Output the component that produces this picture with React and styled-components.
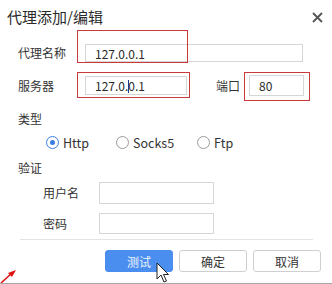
import React from "react";
import styled, { createGlobalStyle } from "styled-components";

const Global = createGlobalStyle`
  html, body { margin: 0; padding: 0; background: #fff; }
  * { box-sizing: border-box; }
`;

const Dialog = styled.div`
  position: relative;
  width: 332px;
  height: 284px;
  overflow: hidden;
  background: #fff;
  border-bottom: 1px solid #a8a8a8;
  font-family: "Noto Sans CJK SC", "Noto Sans", sans-serif;
  color: #333;
  display: flex;
  flex-direction: column;
`;

const Header = styled.div`
  height: 34px;
  display: flex;
  align-items: center;
  justify-content: space-between;
  padding: 0 9px 0 7px;
`;

const Title = styled.div`
  font-size: 15px;
  line-height: 20px;
  color: #2a2a2a;
  margin-top: -1px;
`;

const Close = styled.svg`
  width: 11px;
  height: 11px;
  margin-top: 1px;
`;

const Body = styled.div`
  display: flex;
  flex-direction: column;
  padding-left: 18px;
`;

const Row = styled.div`
  display: flex;
  align-items: center;
  margin-top: ${(p) => p.$mt || 0}px;
  padding-left: ${(p) => p.$indent || 0}px;
`;

const Label = styled.span`
  font-size: 12px;
  line-height: 16px;
  width: ${(p) => p.$w}px;
  flex: none;
  color: #333;
`;

const Section = styled.div`
  font-size: 12px;
  line-height: 16px;
  margin-top: ${(p) => p.$mt || 0}px;
  color: #333;
`;

const Field = styled.div`
  position: relative;
  width: ${(p) => p.$w}px;
  height: ${(p) => p.$h}px;
  border: 1px solid #d6d6d6;
  background: #fff;
  display: flex;
  align-items: center;
  padding-left: 9px;
  font-size: 12px;
  color: #2a2a2a;
  flex: none;
`;

const Caret = styled.span`
  display: inline-block;
  width: 1px;
  height: 13px;
  background: #1a3a8a;
  vertical-align: middle;
  margin: 0 -1px 0 0;
  position: relative;
  top: -1px;
`;

const Mark = styled.div`
  position: absolute;
  left: ${(p) => p.$l}px;
  top: ${(p) => p.$t}px;
  width: ${(p) => p.$w}px;
  height: ${(p) => p.$h}px;
  border: 1.5px solid #c9383b;
  pointer-events: none;
`;

const PortLabel = styled.span`
  font-size: 12px;
  line-height: 16px;
  margin-left: ${(p) => p.$ml}px;
  margin-right: ${(p) => p.$mr}px;
`;

const RadioGroup = styled.div`
  display: flex;
  align-items: center;
  margin-top: 7px;
  padding-left: 28px;
  height: 16px;
`;

const RadioItem = styled.label`
  display: flex;
  align-items: center;
  width: ${(p) => p.$w}px;
  font-size: 12.5px;
  color: #333;
`;

const Dot = styled.span`
  width: 13px;
  height: 13px;
  border-radius: 50%;
  border: 1px solid ${(p) => (p.$on ? "#3a7ee4" : "#9a9a9a")};
  display: flex;
  align-items: center;
  justify-content: center;
  margin-right: 4px;
  flex: none;
  &::after {
    content: "";
    width: 5px;
    height: 5px;
    border-radius: 50%;
    background: ${(p) => (p.$on ? "#3a7ee4" : "transparent")};
  }
`;

const Divider = styled.div`
  margin: 5px 19px 0 20px;
  height: 1px;
  background: #e3e3e3;
`;

const Buttons = styled.div`
  display: flex;
  gap: 6px;
  padding-left: 105px;
  margin-top: 10px;
`;

const Button = styled.div`
  width: 68px;
  height: 22px;
  border-radius: 3px;
  display: flex;
  align-items: center;
  justify-content: center;
  font-size: 12px;
  border: 1px solid ${(p) => (p.$primary ? "#4a8cf0" : "#cfcfcf")};
  background: ${(p) => (p.$primary ? "#4a8ef0" : "#fff")};
  color: ${(p) => (p.$primary ? "#eef4ff" : "#333")};
`;

const Overlay = styled.svg`
  position: absolute;
  left: ${(p) => p.$l}px;
  top: ${(p) => p.$t}px;
  pointer-events: none;
`;

export default function App() {
  return (
    <>
      <Global />
      <Dialog>
        <Header>
          <Title>代理添加/编辑</Title>
          <Close viewBox="0 0 11 11">
            <path d="M1 1 L10 10 M10 1 L1 10" stroke="#555" strokeWidth="1.8" />
          </Close>
        </Header>
        <Body>
          <Row $mt={10}>
            <Label $w={67}>代理名称</Label>
            <Field $w={218} $h={18}>
              127.0.0.1
              <Mark $l={-9} $t={-15} $w={111} $h={33} />
            </Field>
          </Row>
          <Row $mt={13}>
            <Label $w={67}>服务器</Label>
            <Field $w={102} $h={19}>
              <span>
                127.0.<Caret />0.1
              </span>
              <Mark $l={-9} $t={-5} $w={113} $h={26} />
            </Field>
            <PortLabel $ml={29} $mr={9}>端口</PortLabel>
            <Field $w={55} $h={21}>
              80
              <Mark $l={-6} $t={-4} $w={66} $h={29} />
            </Field>
          </Row>
          <Section $mt={15}>类型</Section>
          <RadioGroup>
            <RadioItem $w={70}>
              <Dot $on />
              Http
            </RadioItem>
            <RadioItem $w={81}>
              <Dot />
              Socks5
            </RadioItem>
            <RadioItem $w={50}>
              <Dot />
              Ftp
            </RadioItem>
          </RadioGroup>
          <Section $mt={10}>验证</Section>
          <Row $mt={6} $indent={25}>
            <Label $w={56}>用户名</Label>
            <Field $w={115} $h={22} />
          </Row>
          <Row $mt={9} $indent={25}>
            <Label $w={56}>密码</Label>
            <Field $w={115} $h={21} />
          </Row>
        </Body>
        <Divider />
        <Buttons>
          <Button $primary>测试</Button>
          <Button>确定</Button>
          <Button>取消</Button>
        </Buttons>
        <Overlay $l={156} $t={262} width="14" height="22" viewBox="0 0 14 22">
          <path
            d="M1 1 L1 17 L5 13 L8 20 L10.5 19 L7.5 12.5 L12.5 12.5 Z"
            fill="#fff"
            stroke="#222"
            strokeWidth="1"
            strokeLinejoin="round"
          />
        </Overlay>
        <Overlay $l={0} $t={268} width="18" height="16" viewBox="0 0 18 16">
          <path d="M1 15 L12 5" stroke="#e01010" strokeWidth="1.5" />
          <path d="M16 2 L8 5 L12 9 Z" fill="#e01010" />
        </Overlay>
      </Dialog>
    </>
  );
}
